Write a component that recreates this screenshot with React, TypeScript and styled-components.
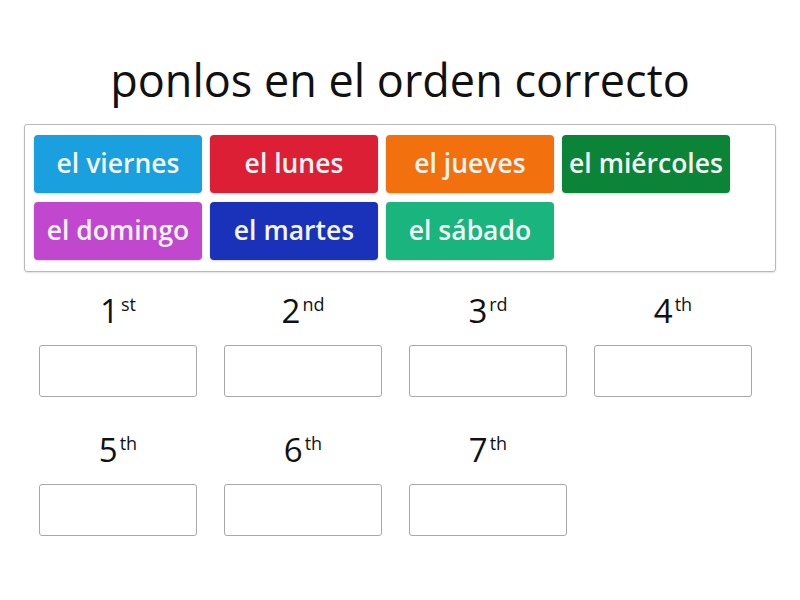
import React from "react";
import styled, { createGlobalStyle } from "styled-components";

const Global = createGlobalStyle`
  html, body { margin: 0; padding: 0; background: #ffffff; }
  body { font-family: "Open Sans", "Noto Sans", sans-serif; }
`;

const Page = styled.div`
  width: 800px;
  height: 600px;
  box-sizing: border-box;
  padding: 51px 24px 0 24px;
  display: flex;
  flex-direction: column;
`;

const Title = styled.h1`
  margin: 0;
  height: 73px;
  font-size: 45px;
  font-weight: 400;
  line-height: 58px;
  text-align: center;
  color: #111;
`;

const Tray = styled.div`
  box-sizing: border-box;
  width: 752px;
  height: 148px;
  border: 1px solid #b8b8b8;
  border-radius: 3px;
  box-shadow: 0 1px 2px rgba(0, 0, 0, 0.12);
  padding: 10px 9px;
  display: grid;
  grid-template-columns: repeat(4, 168px);
  grid-auto-rows: 58px;
  column-gap: 8px;
  row-gap: 9px;
`;

const Tile = styled.div<{ $bg: string }>`
  background: ${(p) => p.$bg};
  border-radius: 4px;
  display: flex;
  align-items: center;
  justify-content: center;
  padding-bottom: 2px;
  color: #f3f5f5;
  font-size: 26.5px;
  font-weight: 600;
  white-space: nowrap;
  box-shadow: 0 1px 2px rgba(0, 0, 0, 0.18);
`;

const Slots = styled.div`
  margin-top: 21px;
  padding-left: 2px;
  display: grid;
  grid-template-columns: repeat(4, 185px);
  row-gap: 35px;
`;

const Slot = styled.div`
  display: flex;
  flex-direction: column;
  align-items: flex-start;
`;

const Label = styled.div`
  width: 158px;
  margin-left: 13px;
  height: 52px;
  text-align: center;
  font-size: 33px;
  line-height: 36px;
  color: #111;
  sup {
    font-size: 18px;
    vertical-align: top;
    line-height: 22px;
    margin-left: 2px;
  }
`;

const Box = styled.div`
  box-sizing: border-box;
  margin-left: 13px;
  width: 158px;
  height: 52px;
  border: 1px solid #a8a8a8;
  border-radius: 3px;
  background: #fff;
`;

const tiles = [
  { t: "el viernes", c: "#1a9fdf" },
  { t: "el lunes", c: "#dd1f36" },
  { t: "el jueves", c: "#f2700d" },
  { t: "el miércoles", c: "#0c8437" },
  { t: "el domingo", c: "#c147cf" },
  { t: "el martes", c: "#1a31b9" },
  { t: "el sábado", c: "#1ab47e" },
];

const slots = [
  ["1", "st"],
  ["2", "nd"],
  ["3", "rd"],
  ["4", "th"],
  ["5", "th"],
  ["6", "th"],
  ["7", "th"],
];

export default function App() {
  return (
    <>
      <Global />
      <Page>
        <Title>ponlos en el orden correcto</Title>
        <Tray>
          {tiles.map((x) => (
            <Tile key={x.t} $bg={x.c}>
              {x.t}
            </Tile>
          ))}
        </Tray>
        <Slots>
          {slots.map(([n, s]) => (
            <Slot key={n}>
              <Label>
                {n}
                <sup>{s}</sup>
              </Label>
              <Box />
            </Slot>
          ))}
        </Slots>
      </Page>
    </>
  );
}
